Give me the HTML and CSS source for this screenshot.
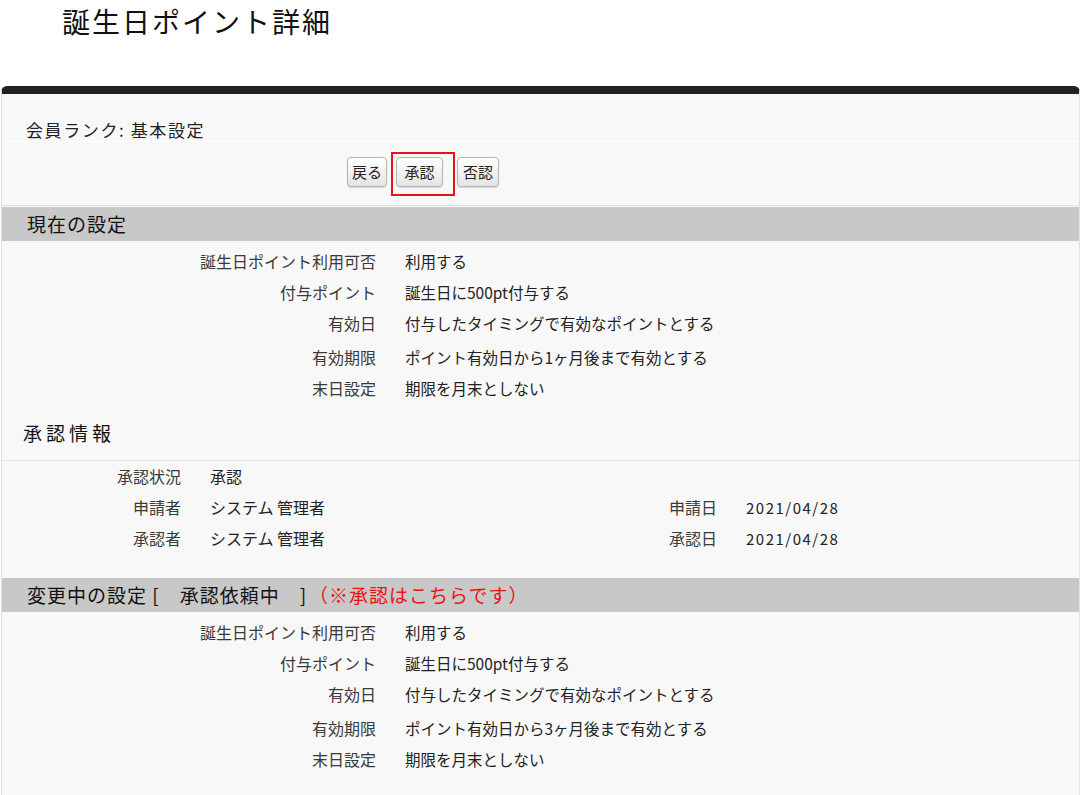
FILE: index.html
```html
<!DOCTYPE html>
<html lang="ja">
<head>
  <meta charset="UTF-8">
  <meta name="viewport" content="width=device-width, initial-scale=1.0">
  <title>誕生日ポイント詳細</title>
  <link rel="stylesheet" href="styles.css">
</head>
<body>
  <h1 class="page-title">誕生日ポイント詳細</h1>

  <div class="panel">
    <div class="rank">会員ランク: 基本設定</div>

    <div class="actions">
      <button class="btn btn-back">戻る</button>
      <span class="mark"><button class="btn btn-ok">承認</button></span>
      <button class="btn btn-ng">否認</button>
    </div>

    <h2 class="band">現在の設定</h2>
    <dl class="setting">
      <dt>誕生日ポイント利用可否</dt><dd>利用する</dd>
      <dt>付与ポイント</dt><dd>誕生日に500pt付与する</dd>
      <dt>有効日</dt><dd>付与したタイミングで有効なポイントとする</dd>
      <dt class="gap">有効期限</dt><dd class="gap">ポイント有効日から1ヶ月後まで有効とする</dd>
      <dt>末日設定</dt><dd>期限を月末としない</dd>
    </dl>

    <h3 class="sub-title">承認情報</h3>
    <div class="approval">
      <span class="lbl">承認状況</span><span class="val">承認</span><span></span><span></span>
      <span class="lbl">申請者</span><span class="val">システム 管理者</span><span class="lbl">申請日</span><span class="val date">2021/04/28</span>
      <span class="lbl">承認者</span><span class="val">システム 管理者</span><span class="lbl">承認日</span><span class="val date">2021/04/28</span>
    </div>

    <h2 class="band">変更中の設定 [　承認依頼中　]<span class="note">（※承認はこちらです）</span></h2>
    <dl class="setting">
      <dt>誕生日ポイント利用可否</dt><dd>利用する</dd>
      <dt>付与ポイント</dt><dd>誕生日に500pt付与する</dd>
      <dt>有効日</dt><dd>付与したタイミングで有効なポイントとする</dd>
      <dt class="gap">有効期限</dt><dd class="gap">ポイント有効日から3ヶ月後まで有効とする</dd>
      <dt>末日設定</dt><dd>期限を月末としない</dd>
    </dl>
  </div>
</body>
</html>
```

FILE: styles.css
```css
*{ padding: 0; margin: 0; box-sizing: border-box; }
body{ font-family: "Noto Sans CJK JP", "Noto Sans", sans-serif; color: #222; background: #fff; }

.page-title{ font-size: 28px; font-weight: normal; letter-spacing: 2px; line-height: 42px; height: 86px; padding-left: 62px; color: #111; }

.panel{ margin-left: 1px; width: 1079px; height: 709px; background: #f8f8f8;
  border-top: 8px solid #222; border-left: 1px solid #e2e2e2; border-right: 1px solid #e2e2e2;
  border-radius: 6px 6px 0 0; }

.rank{ height: 48px; padding: 25px 0 0 24px; font-size: 17px; letter-spacing: 1.6px; line-height: 22px; border-bottom: 1px solid #fff; }

.actions{ display: flex; align-items: flex-start; gap: 4px; height: 64px; padding: 10px 0 0 345px;
  border-bottom: 1px solid #e2e2e2; }
.btn{ font-family: inherit; font-size: 15px; color: #222; height: 30px; line-height: 28px;
  padding: 0 4px; border: 1px solid #b4b4b4; border-radius: 4px;
  background: linear-gradient(#ffffff, #e4e4e4); box-shadow: 0 1px 1px rgba(0,0,0,0.15); }
.btn-back{ margin-top: 5px; width: 40px; }
.btn-ok{ width: 47px; }
.btn-ng{ margin-top: 5px; margin-left: -2px; width: 42px; }
.mark{ display: block; border: 2px solid #e8121b; padding: 3px 10px 7px 3px; }

.band{ margin-top: 1px; height: 34px; line-height: 34px; padding-left: 25px; font-size: 19px; font-weight: normal;
  letter-spacing: 1px; background: #c8c8c8; color: #111; }
.band .note{ color: #f01010; margin-left: 2px; letter-spacing: 1px; font-size: 19px; }

.setting{ display: grid; grid-template-columns: 374px auto; column-gap: 29px; padding-top: 5px; font-size: 15.5px; }
.setting dt, .setting dd{ height: 31px; line-height: 31px; }
.setting dt{ text-align: right; color: #3a3a3a; font-size: 16px; }
.setting dd{ color: #222; }
.setting .gap{ margin-top: 3px; }

.sub-title{ height: 57px; padding: 18px 0 0 21px; font-size: 19px; line-height: 22px; font-weight: normal;
  letter-spacing: 4px; border-bottom: 1px solid #e2e2e2; color: #111; }

.approval{ display: grid; grid-template-columns: 179px 360px 118px auto; column-gap: 29px; padding-bottom: 23px; font-size: 16px; }
.approval span{ height: 31px; line-height: 31px; }
.approval .lbl{ text-align: right; color: #3a3a3a; }
.approval .val{ color: #222; }
.approval .date{ font-size: 15px; letter-spacing: 1.5px; }
```
